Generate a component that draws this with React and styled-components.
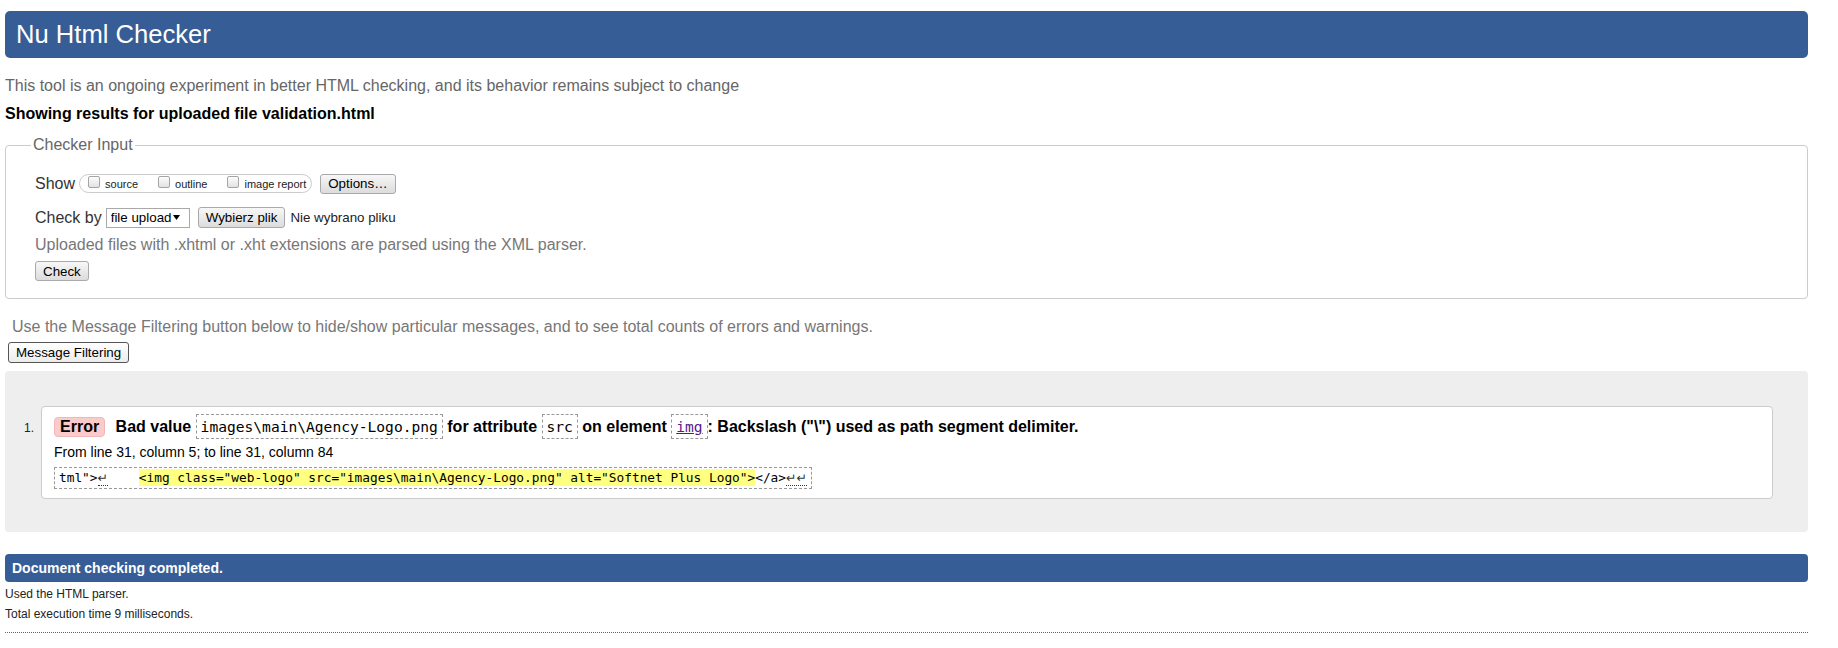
import React from 'react';
import styled, { createGlobalStyle } from 'styled-components';

const GlobalStyle = createGlobalStyle`
  html,
  body {
    margin: 0;
    padding: 0;
    background: #fff;
  }

  body {
    font-family: 'Liberation Sans', Arial, sans-serif;
    font-size: 16px;
    color: #000;
  }
`;

const Page = styled.div`
  padding: 11px 30px 12px 5px;
`;

const Header = styled.h1`
  margin: 0;
  padding: 9px 11px;
  background: #365d95;
  color: #fff;
  border-radius: 5px;
  font-size: 25.6px;
  font-weight: normal;
  line-height: 29px;
`;

const Intro = styled.p`
  margin: 18.5px 0 0;
  color: #666;
  line-height: 18px;
`;

const Showing = styled.p`
  margin: 10px 0 0;
  font-weight: bold;
  line-height: 18px;
`;

const Fieldset = styled.fieldset`
  margin: 13.5px 0 0;
  padding: 0 29px 17px;
  border: 1px solid #ccc;
  border-radius: 4px;
`;

const Legend = styled.legend`
  margin-left: -4px;
  padding: 0 2px;
  color: #666;
  line-height: 18px;
`;

const ControlRow = styled.div`
  display: flex;
  align-items: center;
  height: ${({ $height }) => $height || 24}px;
  margin-top: ${({ $gap }) => $gap || 0}px;
  color: #333;
  line-height: 18px;
`;

const CheckGroup = styled.span`
  display: inline-flex;
  align-items: center;
  box-sizing: border-box;
  height: 19px;
  margin-left: 4px;
  padding: 0 5px 0 8px;
  border: 1px solid #ccc;
  border-radius: 10px;
`;

const CheckOption = styled.label`
  display: inline-flex;
  align-items: center;
  font-size: 11px;
  color: #222;

  & + & {
    margin-left: 20px;
  }
`;

const Checkbox = styled.input.attrs({ type: 'checkbox' })`
  appearance: none;
  box-sizing: border-box;
  width: 12px;
  height: 12px;
  margin: 0 5px 3px 0;
  border: 1px solid #a5a5a5;
  border-radius: 2px;
  background: linear-gradient(#fcfcfc, #e2e2e2);
`;

const Button = styled.button`
  box-sizing: border-box;
  height: ${({ $height }) => $height || 20}px;
  margin: 0 0 0 ${({ $ml }) => $ml || 0}px;
  padding: 0 7px;
  font: 13.33px 'Liberation Sans', Arial, sans-serif;
  color: #000;
  border: 1px solid #a9a9a9;
  border-radius: 3px;
  background: linear-gradient(#f7f7f7, #dcdcdc);
`;

const SelectBox = styled.span`
  display: inline-flex;
  align-items: center;
  box-sizing: border-box;
  width: 84px;
  height: 20px;
  margin-left: 4px;
  padding: 0 9px 0 4px;
  border: 1px solid #a9a9a9;
  background: #fff;
`;

const Select = styled.select`
  appearance: none;
  flex: 1;
  margin: 0;
  padding: 0;
  border: 0;
  outline: none;
  background: transparent;
  font: 13.33px 'Liberation Sans', Arial, sans-serif;
  color: #000;
`;

const FileName = styled.span`
  margin-left: 5px;
  font-size: 13.33px;
  color: #222;
`;

const Hint = styled.p`
  margin: 6px 0 0;
  color: #777;
  line-height: 18px;
`;

const FilterNote = styled.p`
  margin: 19px 0 0 7px;
  color: #777;
  line-height: 18px;
`;

const FilterButton = styled(Button)`
  display: block;
  margin: 6px 0 0 3px;
  padding: 0 7px;
  border-color: #555;
  background: linear-gradient(#fff, #ececec);
`;

const Results = styled.ol`
  margin: 8px 0 0;
  padding: 35px 35px 33px 19px;
  background: #eee;
  border-radius: 4px;
  list-style: none;
`;

const Item = styled.li`
  display: flex;
  align-items: baseline;
`;

const Marker = styled.span`
  flex: 0 0 17px;
  font-size: 12px;
  color: #222;
`;

const Card = styled.div`
  flex: 1;
  padding: 7px 12px 9px;
  background: #fff;
  border: 1px solid #ccc;
  border-radius: 4px;
`;

const Message = styled.p`
  margin: 0;
  font-weight: bold;
  line-height: 18px;
`;

const Badge = styled.strong`
  display: inline-block;
  margin-right: 6px;
  padding: 0 5px;
  background: #fbcaca;
  border: 1px solid #f0b9b9;
  border-radius: 4px;
`;

const Code = styled.code`
  display: inline-block;
  padding: 3px 4px;
  border: 1px dashed #999;
  font-family: 'DejaVu Sans Mono', 'Liberation Mono', monospace;
  font-size: 14.6px;
  font-weight: normal;
  line-height: 17px;
`;

const CodeLink = styled.a`
  color: #551a8b;
  text-decoration: underline;
`;

const Location = styled.p`
  margin: 5px 0 0;
  font-size: 14px;
  line-height: 16px;
`;

const Extract = styled.p`
  width: fit-content;
  margin: 7px 0 0;
  padding: 1px 4px 2px;
  border: 1px dashed #999;
  font-family: 'DejaVu Sans Mono', 'Liberation Mono', monospace;
  font-size: 12.8px;
  line-height: 17px;
  white-space: pre;
`;

const Mark = styled.mark`
  display: inline-block;
  background: #ffff80;
  color: #000;
`;

const LineBreak = styled.span`
  font-family: 'DejaVu Sans', 'Noto Sans', sans-serif;
  font-size: 12.5px;
  border-bottom: 1px dotted #333;
  color: #333;
`;

const Completed = styled.h2`
  margin: 22px 0 0;
  padding: 6px 7px;
  background: #365d95;
  color: #fff;
  border-radius: 4px;
  font-size: 14px;
  line-height: 16px;
`;

const Detail = styled.p`
  margin: ${({ $gap }) => $gap}px 0 0;
  font-size: 12px;
  line-height: 14px;
  color: #222;
`;

const DottedRule = styled.div`
  margin-top: 11px;
  border-top: 1px dotted #666;
`;

const SelectArrow = () => (
  <svg width="7" height="5" viewBox="0 0 7 5">
    <path d="M0 0h7L3.5 5z" fill="#000" />
  </svg>
);

export default function App() {
  return (
    <>
      <GlobalStyle />
      <Page>
        <Header>Nu Html Checker</Header>
        <Intro>
          This tool is an ongoing experiment in better HTML checking, and its behavior remains
          subject to change
        </Intro>
        <Showing>Showing results for uploaded file validation.html</Showing>

        <Fieldset>
          <Legend>Checker Input</Legend>
          <ControlRow $gap={17.5}>
            Show
            <CheckGroup>
              <CheckOption>
                <Checkbox />
                source
              </CheckOption>
              <CheckOption>
                <Checkbox />
                outline
              </CheckOption>
              <CheckOption>
                <Checkbox />
                image report
              </CheckOption>
            </CheckGroup>
            <Button type="button" $ml={8}>
              Options…
            </Button>
          </ControlRow>
          <ControlRow $gap={10}>
            Check by
            <SelectBox>
              <Select defaultValue="file">
                <option value="file">file upload</option>
              </Select>
              <SelectArrow />
            </SelectBox>
            <Button type="button" $ml={8} $height={21}>
              Wybierz plik
            </Button>
            <FileName>Nie wybrano pliku</FileName>
          </ControlRow>
          <Hint>Uploaded files with .xhtml or .xht extensions are parsed using the XML parser.</Hint>
          <ControlRow $gap={7.5} $height={20}>
            <Button type="button">Check</Button>
          </ControlRow>
        </Fieldset>

        <FilterNote>
          Use the Message Filtering button below to hide/show particular messages, and to see total
          counts of errors and warnings.
        </FilterNote>
        <FilterButton type="button" $height={21}>
          Message Filtering
        </FilterButton>

        <Results>
          <Item>
            <Marker>1.</Marker>
            <Card>
              <Message>
                <Badge>Error</Badge> Bad value <Code>images\main\Agency-Logo.png</Code> for
                attribute <Code>src</Code> on element{' '}
                <Code>
                  <CodeLink href="#img">img</CodeLink>
                </Code>
                : Backslash ("\") used as path segment delimiter.
              </Message>
              <Location>From line 31, column 5; to line 31, column 84</Location>
              <Extract>
                {'tml">'}
                <LineBreak>↵</LineBreak>
                {'    '}
                <Mark>{'<img class="web-logo" src="images\\main\\Agency-Logo.png" alt="Softnet Plus Logo">'}</Mark>
                {'</a>'}
                <LineBreak>↵↵</LineBreak>
              </Extract>
            </Card>
          </Item>
        </Results>

        <Completed>Document checking completed.</Completed>
        <Detail $gap={5}>Used the HTML parser.</Detail>
        <Detail $gap={6}>Total execution time 9 milliseconds.</Detail>
        <DottedRule />
      </Page>
    </>
  );
}
